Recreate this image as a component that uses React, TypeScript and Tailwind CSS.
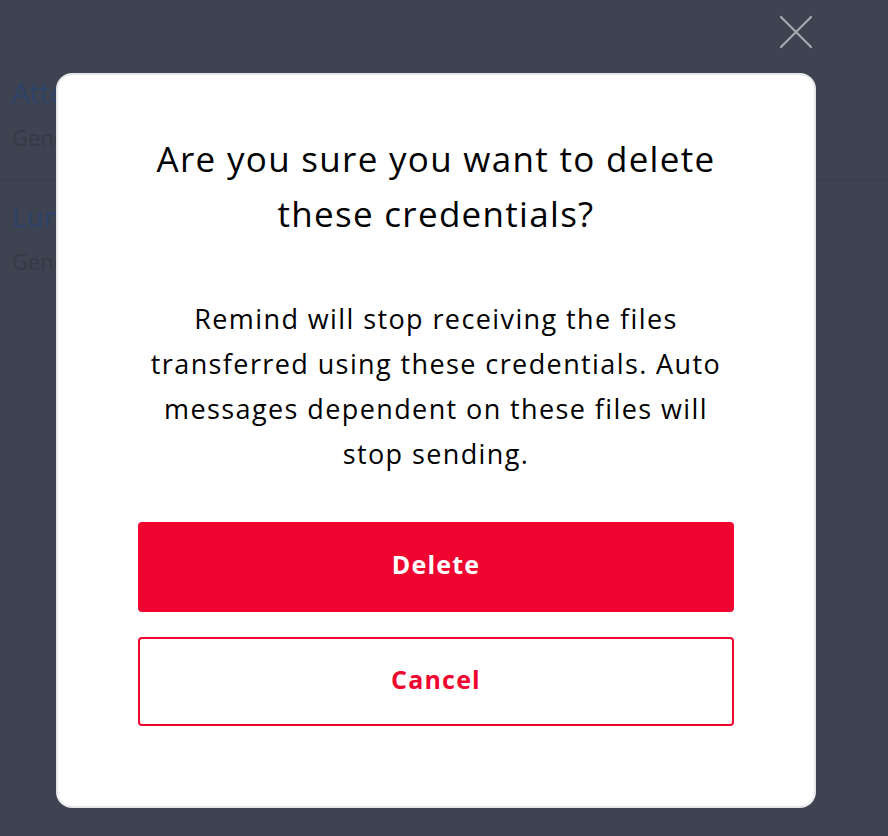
import React from "react";

export default function App() {
  return (
    <div
      className="relative w-[888px] h-[836px] overflow-hidden bg-[#3e4352]"
      style={{ fontFamily: "'Open Sans', 'Noto Sans', sans-serif" }}
    >
      {/* background page (dimmed) */}
      <div className="flex flex-col">
        <div className="px-3 pt-[72px] pb-[28px] border-b border-[#383c4a]">
          <div className="text-[28px] leading-[40px] text-[#2d4268]">Attendance</div>
          <div className="text-[22px] leading-[30px] mt-[10px] text-[#353946]">General</div>
        </div>
        <div className="px-3 pt-[15px]">
          <div className="text-[28px] leading-[40px] text-[#2d4268]">Lunch</div>
          <div className="text-[22px] leading-[30px] mt-[10px] text-[#353946]">General</div>
        </div>
      </div>

      {/* close button */}
      <button className="absolute left-[778px] top-[14px] w-[36px] h-[36px] flex items-center justify-center">
        <svg width="36" height="36" viewBox="0 0 36 36" fill="none">
          <path d="M3 3 L33 33 M33 3 L3 33" stroke="#a6a8ad" strokeWidth="2.2" strokeLinecap="round" />
        </svg>
      </button>

      {/* modal */}
      <div className="absolute left-[56px] top-[73px] w-[760px] h-[735px] bg-white rounded-[16px] border-2 border-[#e4e6ea] flex flex-col px-[80px] pt-[56px]">
        <h2 className="text-center text-[35px] leading-[55px] tracking-[1.3px] text-black font-normal">
          Are you sure you want to delete
          <br />
          these credentials?
        </h2>
        <p className="mt-[55px] text-center text-[27px] leading-[45px] tracking-[1.4px] text-black">
          Remind will stop receiving the files
          <br />
          transferred using these credentials. Auto
          <br />
          messages dependent on these files will
          <br />
          stop sending.
        </p>
        <button className="mt-[46px] h-[90px] w-full rounded-[4px] bg-[#ef0530] text-white text-[25px] font-bold tracking-[1.2px] pb-[4px]">
          Delete
        </button>
        <button className="mt-[25px] h-[89px] w-full rounded-[4px] border-2 border-[#ef0530] bg-white text-[#ef0530] text-[25px] font-bold tracking-[1.2px] pb-[4px]">
          Cancel
        </button>
      </div>
    </div>
  );
}
